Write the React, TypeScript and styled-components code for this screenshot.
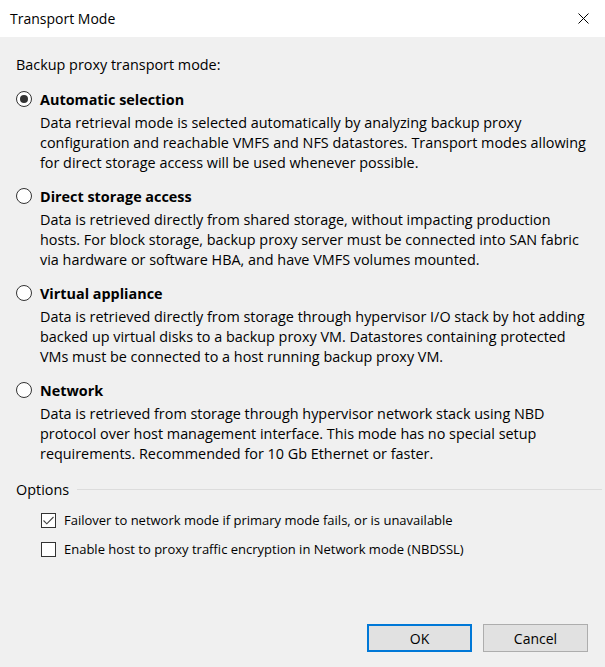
import React, { useState } from "react";
import styled, { createGlobalStyle } from "styled-components";

const GlobalStyle = createGlobalStyle`
  html, body { margin: 0; padding: 0; background: #f0f0f0; }
  body { font-family: "Open Sans", "Noto Sans", sans-serif; color: #000; }
  * { box-sizing: border-box; }
`;

const Dialog = styled.div`
  width: 605px;
  height: 667px;
  display: flex;
  flex-direction: column;
  background: #f0f0f0;
  font-size: 14.4px;
`;

const TitleBar = styled.div`
  height: 37px;
  background: #fff;
  display: flex;
  align-items: center;
  justify-content: space-between;
  padding-left: 10px;
`;

const Title = styled.div`
  font-size: 14px;
`;

const CloseButton = styled.div`
  width: 44px;
  height: 37px;
  display: flex;
  align-items: center;
  justify-content: center;
`;

const Body = styled.div`
  flex: 1;
  display: flex;
  flex-direction: column;
  padding: 18px 17px 15px 16px;
`;

const Prompt = styled.div`
  height: 20px;
  line-height: 20px;
  margin-bottom: 14px;
`;

const ModeBlock = styled.div`
  display: flex;
  flex-direction: column;
  margin-bottom: 13px;
`;

const RadioRow = styled.label`
  display: flex;
  align-items: center;
  height: 20px;
  gap: 8px;
  cursor: default;
`;

const RadioCircle = styled.span<{ $checked: boolean }>`
  width: 16px;
  height: 16px;
  border-radius: 50%;
  border: 1px solid #333;
  background: #fff;
  display: flex;
  align-items: center;
  justify-content: center;
  &::after {
    content: "";
    width: 8px;
    height: 8px;
    border-radius: 50%;
    background: #333;
    display: ${(p) => (p.$checked ? "block" : "none")};
  }
`;

const ModeLabel = styled.span`
  font-weight: 700;
`;

const Description = styled.div`
  margin-top: 4px;
  padding-left: 24px;
  line-height: 20px;
`;

const GroupHeader = styled.div`
  display: flex;
  align-items: center;
  height: 20px;
  gap: 8px;
  margin-top: 2px;
`;

const GroupLine = styled.div`
  flex: 1;
  height: 1px;
  background: #dcdcdc;
  margin-right: -14px;
`;

const CheckList = styled.div`
  display: flex;
  flex-direction: column;
  gap: 9px;
  margin-top: 11px;
  padding-left: 25px;
`;

const CheckRow = styled.label`
  display: flex;
  align-items: center;
  height: 20px;
  gap: 8px;
  font-size: 13px;
`;

const CheckBox = styled.span`
  width: 15px;
  height: 15px;
  border: 1px solid #333;
  background: #fff;
  display: flex;
  align-items: center;
  justify-content: center;
`;

const Footer = styled.div`
  margin-top: auto;
  display: flex;
  justify-content: flex-end;
  gap: 11px;
`;

const Button = styled.button<{ $default?: boolean }>`
  width: 105px;
  height: 28px;
  background: #e1e1e1;
  border: ${(p) => (p.$default ? "2px solid #0078d7" : "1px solid #adadad")};
  font-family: inherit;
  font-size: 14px;
  color: #000;
  padding: 0;
`;

const modes = [
  {
    label: "Automatic selection",
    text: [
      "Data retrieval mode is selected automatically by analyzing backup proxy",
      "configuration and reachable VMFS and NFS datastores. Transport modes allowing",
      "for direct storage access will be used whenever possible.",
    ],
  },
  {
    label: "Direct storage access",
    text: [
      "Data is retrieved directly from shared storage, without impacting production",
      "hosts. For block storage, backup proxy server must be connected into SAN fabric",
      "via hardware or software HBA, and have VMFS volumes mounted.",
    ],
  },
  {
    label: "Virtual appliance",
    text: [
      "Data is retrieved directly from storage through hypervisor I/O stack by hot adding",
      "backed up virtual disks to a backup proxy VM. Datastores containing protected",
      "VMs must be connected to a host running backup proxy VM.",
    ],
  },
  {
    label: "Network",
    text: [
      "Data is retrieved from storage through hypervisor network stack using NBD",
      "protocol over host management interface. This mode has no special setup",
      "requirements. Recommended for 10 Gb Ethernet or faster.",
    ],
  },
];

const Check = () => (
  <svg width="11" height="9" viewBox="0 0 11 9">
    <path d="M0.5 4.5 L3.8 7.8 L10.5 1" stroke="#444" strokeWidth="1.1" fill="none" />
  </svg>
);

export default function App() {
  const [mode, setMode] = useState(0);
  const [failover, setFailover] = useState(true);
  const [encrypt, setEncrypt] = useState(false);
  return (
    <>
      <GlobalStyle />
      <Dialog>
        <TitleBar>
          <Title>Transport Mode</Title>
          <CloseButton>
            <svg width="11" height="11" viewBox="0 0 11 11">
              <path d="M0.5 0.5 L10.5 10.5 M10.5 0.5 L0.5 10.5" stroke="#000" strokeWidth="1" fill="none" />
            </svg>
          </CloseButton>
        </TitleBar>
        <Body>
          <Prompt>Backup proxy transport mode:</Prompt>
          {modes.map((m, i) => (
            <ModeBlock key={m.label}>
              <RadioRow onClick={() => setMode(i)}>
                <RadioCircle $checked={mode === i} />
                <ModeLabel>{m.label}</ModeLabel>
              </RadioRow>
              <Description>
                {m.text.map((t) => (
                  <div key={t}>{t}</div>
                ))}
              </Description>
            </ModeBlock>
          ))}
          <GroupHeader>
            <span>Options</span>
            <GroupLine />
          </GroupHeader>
          <CheckList>
            <CheckRow onClick={() => setFailover(!failover)}>
              <CheckBox>{failover && <Check />}</CheckBox>
              Failover to network mode if primary mode fails, or is unavailable
            </CheckRow>
            <CheckRow onClick={() => setEncrypt(!encrypt)}>
              <CheckBox>{encrypt && <Check />}</CheckBox>
              Enable host to proxy traffic encryption in Network mode (NBDSSL)
            </CheckRow>
          </CheckList>
          <Footer>
            <Button $default>OK</Button>
            <Button>Cancel</Button>
          </Footer>
        </Body>
      </Dialog>
    </>
  );
}
